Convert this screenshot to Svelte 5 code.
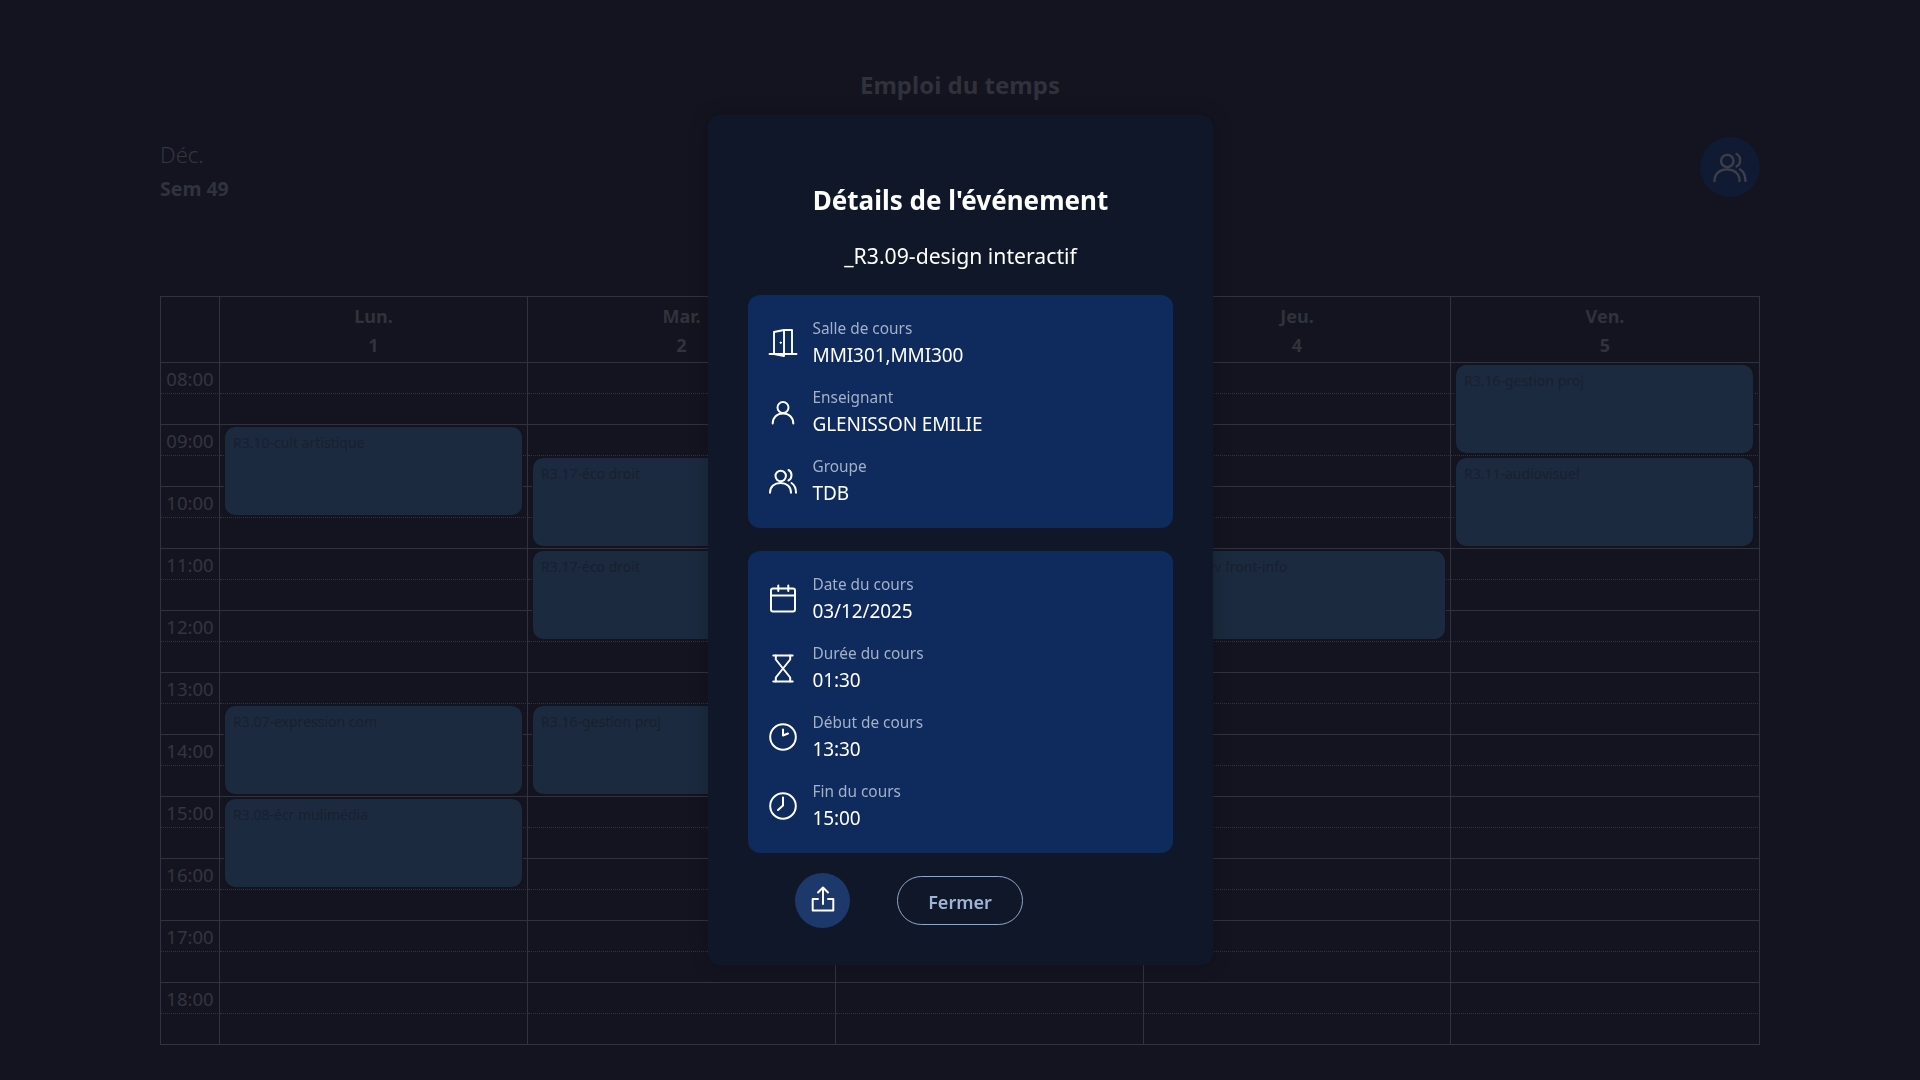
<script>
  const days = [
    { name: 'Lun.', num: 1, events: [
      { slot: 2, label: 'R3.10-cult artistique' },
      { slot: 11, label: 'R3.07-expression com' },
      { slot: 14, label: 'R3.08-écr mulimédia' }
    ] },
    { name: 'Mar.', num: 2, events: [
      { slot: 3, label: 'R3.17-éco droit' },
      { slot: 6, label: 'R3.17-éco droit' },
      { slot: 11, label: 'R3.16-gestion proj' }
    ] },
    { name: 'Mer.', num: 3, events: [] },
    { name: 'Jeu.', num: 4, events: [
      { slot: 6, label: 'R3.12-dev front-info' }
    ] },
    { name: 'Ven.', num: 5, events: [
      { slot: 0, label: 'R3.16-gestion proj' },
      { slot: 3, label: 'R3.11-audiovisuel' }
    ] }
  ];
  const hours = ['08:00','09:00','10:00','11:00','12:00','13:00','14:00','15:00','16:00','17:00','18:00'];
  const slots = Array.from({ length: 22 }, (_, i) => i);
</script>

{#snippet groupIcon(size)}
  <svg width={size} height={size} viewBox="0 0 32 32" fill="none" stroke="currentColor" stroke-width="2" stroke-linecap="round" stroke-linejoin="round">
    <circle cx="13.7" cy="11" r="5.2" />
    <path d="M3 27.7C3 21.5 7.5 18 13.5 18S24 21.5 24 27.7" />
    <path d="M21.5 5C25.5 7 25.5 13.5 21.5 15.5" />
    <path d="M24.5 18C27.5 20 29 23.5 29 27.7" />
  </svg>
{/snippet}

<div class="page">
  <h1 class="page-title">Emploi du temps</h1>
  <div class="toolbar">
    <div class="week">
      <div class="month">Déc.</div>
      <div class="sem">Sem 49</div>
    </div>
    <button class="group-btn" aria-label="Groupe">{@render groupIcon(38)}</button>
  </div>

  <div class="calendar">
    <div class="col time-col">
      <div class="head"></div>
      <div class="slots">
        {#each hours as h}
          <div class="slot half"><span class="hour">{h}</span></div>
          <div class="slot"></div>
        {/each}
      </div>
    </div>
    {#each days as d}
      <div class="col">
        <div class="head"><span>{d.name}</span><span>{d.num}</span></div>
        <div class="slots">
          {#each slots as s}
            <div class="slot" class:half={s % 2 === 0} style="grid-row: {s + 1}"></div>
          {/each}
          {#each d.events as e}
            <div class="event" style="grid-row: {e.slot + 1} / span 3">{e.label}</div>
          {/each}
        </div>
      </div>
    {/each}
  </div>
</div>

<div class="overlay">
  <div class="modal">
    <h2 class="title">Détails de l'événement</h2>
    <p class="subtitle">_R3.09-design interactif</p>

    <div class="card">
      <div class="row">
        <svg class="ico" width="32" height="32" viewBox="0 0 32 32" fill="none" stroke="currentColor" stroke-width="1.9" stroke-linecap="round" stroke-linejoin="round">
          <path d="M2.5 27H29.5" />
          <path d="M7 27V5L17 3V29L7 27" />
          <path d="M17 3H25V27" />
          <circle cx="13.7" cy="15.7" r="0.7" fill="currentColor" stroke-width="1" />
        </svg>
        <div class="txt"><span class="lab">Salle de cours</span><span class="val">MMI301,MMI300</span></div>
      </div>
      <div class="row">
        <svg class="ico" width="32" height="32" viewBox="0 0 32 32" fill="none" stroke="currentColor" stroke-width="2" stroke-linecap="round">
          <circle cx="16" cy="11.5" r="5.5" />
          <path d="M5.7 27.5C5.7 21.5 10 17.5 16 17.5S26.3 21.5 26.3 27.5" />
        </svg>
        <div class="txt"><span class="lab">Enseignant</span><span class="val">GLENISSON EMILIE</span></div>
      </div>
      <div class="row">
        <span class="ico">{@render groupIcon(32)}</span>
        <div class="txt"><span class="lab">Groupe</span><span class="val">TDB</span></div>
      </div>
    </div>

    <div class="card second">
      <div class="row">
        <svg class="ico" width="32" height="32" viewBox="0 0 32 32" fill="none" stroke="currentColor" stroke-width="2" stroke-linecap="round" stroke-linejoin="round">
          <rect x="4" y="5.5" width="24" height="23" rx="2" />
          <path d="M4 12.5H28M11.3 2.5V8M21.3 2.5V8" />
        </svg>
        <div class="txt"><span class="lab">Date du cours</span><span class="val">03/12/2025</span></div>
      </div>
      <div class="row">
        <svg class="ico" width="32" height="32" viewBox="0 0 32 32" fill="none" stroke="currentColor" stroke-width="2" stroke-linecap="round" stroke-linejoin="round">
          <path d="M6.3 3.5H25.7M6.3 29.5H25.7" />
          <path d="M8.8 3.5V7.5L23.2 25.5V29.5M23.2 3.5V7.5L8.8 25.5V29.5" />
        </svg>
        <div class="txt"><span class="lab">Durée du cours</span><span class="val">01:30</span></div>
      </div>
      <div class="row">
        <svg class="ico" width="32" height="32" viewBox="0 0 32 32" fill="none" stroke="currentColor" stroke-width="2" stroke-linecap="round" stroke-linejoin="round">
          <circle cx="16" cy="16" r="12.8" />
          <path d="M16 8.5V14.5L21 12.5" />
        </svg>
        <div class="txt"><span class="lab">Début de cours</span><span class="val">13:30</span></div>
      </div>
      <div class="row">
        <svg class="ico" width="32" height="32" viewBox="0 0 32 32" fill="none" stroke="currentColor" stroke-width="2" stroke-linecap="round" stroke-linejoin="round">
          <circle cx="16" cy="16" r="12.8" />
          <path d="M16 7.5V15.5L11 20" />
        </svg>
        <div class="txt"><span class="lab">Fin du cours</span><span class="val">15:00</span></div>
      </div>
    </div>

    <div class="actions">
      <button class="share" aria-label="Partager">
        <svg width="32" height="32" viewBox="0 0 32 32" fill="none" stroke="currentColor" stroke-width="2" stroke-linecap="round" stroke-linejoin="round">
          <path d="M11 14H5.7V25.5H26.3V14H21" />
          <path d="M16 19V2.5M11 7.5L16 2.5L21 7.5" />
        </svg>
      </button>
      <button class="close">Fermer</button>
    </div>
  </div>
</div>

<style>
  :global(body) {
    background: #13141f;
    font-family: "Noto Sans", "Open Sans", sans-serif;
  }
  .page {
    width: 1600px;
    height: 1080px;
    margin: 0 auto;
    box-sizing: border-box;
    padding-top: 68px;
    overflow: hidden;
  }
  .page-title {
    margin: 0;
    font-size: 24px;
    line-height: 34px;
    font-weight: 700;
    text-align: center;
    color: #2f313b;
  }
  .toolbar {
    display: flex;
    justify-content: space-between;
    align-items: flex-start;
    height: 194px;
  }
  .week { padding-top: 37px; }
  .month {
    font-size: 22px;
    line-height: 30px;
    font-weight: 300;
    color: #33353f;
  }
  .sem {
    font-size: 19.5px;
    line-height: 26px;
    margin-top: 7px;
    font-weight: 700;
    color: #30323c;
  }
  .group-btn {
    width: 60px;
    height: 60px;
    margin-top: 35px;
    border: 0;
    border-radius: 50%;
    padding: 0;
    background: #101a33;
    color: #3c3f4a;
    display: flex;
    align-items: center;
    justify-content: center;
  }
  .calendar {
    display: grid;
    grid-template-columns: 59px 308px 308px 308px 307px 1fr;
    border-left: 1px solid #31323d;
    border-top: 1px solid #31323d;
    width: 1600px;
    box-sizing: border-box;
  }
  .head {
    height: 66px;
    box-sizing: border-box;
    border-right: 1px solid #31323d;
    border-bottom: 1px solid #31323d;
    display: flex;
    flex-direction: column;
    align-items: center;
    padding-top: 5px;
    font-weight: 700;
    font-size: 18px;
    line-height: 29px;
    color: #30323c;
  }
  .slots {
    display: grid;
    grid-template-columns: 1fr;
    grid-auto-rows: 31px;
  }
  .slot {
    grid-column: 1;
    box-sizing: border-box;
    border-right: 1px solid #31323d;
    border-bottom: 1px solid #31323d;
    display: flex;
    align-items: center;
    justify-content: center;
  }
  .slot.half { border-bottom: 1px dotted #31323d; }
  .hour {
    font-size: 18.5px;
    line-height: 33px;
    color: #33353f;
  }
  .event {
    grid-column: 1;
    z-index: 1;
    margin: 2px 6px 3px 5px;
    background: #1b2a3e;
    border-radius: 10px;
    box-shadow: 0 0 0 1px #13141f;
    padding: 8px 8px;
    font-size: 14px;
    line-height: 16px;
    color: #182030;
  }
  .col:last-child .event { margin-right: 7px; }
  .overlay {
    position: fixed;
    inset: 0;
    padding-left: 1px;
    display: flex;
    align-items: center;
    justify-content: center;
    z-index: 10;
  }
  .modal {
    width: 505px;
    height: 850px;
    box-sizing: border-box;
    padding: 68px 40px 0;
    background: #101729;
    border-radius: 12px;
    box-shadow: 0 0 20px rgba(10, 12, 20, 0.2);
    color: #fff;
  }
  .title {
    margin: 0;
    font-size: 26px;
    line-height: 34px;
    font-weight: 700;
    text-align: center;
  }
  .subtitle {
    margin: 24px 0 24px;
    font-size: 21.2px;
    line-height: 30px;
    text-align: center;
  }
  .card {
    background: #0f2a5c;
    border-radius: 12px;
    padding: 13px 19px;
  }
  .card.second { margin-top: 23px; }
  .row {
    height: 69px;
    display: flex;
    align-items: center;
    gap: 13.5px;
  }
  .ico {
    flex: none;
    width: 32px;
    height: 32px;
    display: block;
  }
  .txt {
    display: flex;
    flex-direction: column;
    padding-top: 1px;
  }
  .lab {
    padding-top: 3px;
    font-size: 15.4px;
    line-height: 21px;
    color: #a3b1c9;
  }
  .val {
    font-size: 19px;
    line-height: 32px;
    letter-spacing: -0.1px;
    color: #fff;
  }
  .actions {
    display: flex;
    align-items: center;
    margin-top: 20px;
    padding-left: 47px;
    gap: 47px;
  }
  .share {
    width: 55px;
    height: 55px;
    padding: 0;
    border: 0;
    border-radius: 50%;
    background: #1d386a;
    color: #fff;
    display: flex;
    align-items: center;
    justify-content: center;
  }
  .close {
    width: 126px;
    height: 49px;
    padding: 2px 0 0;
    background: transparent;
    border: 1px solid #8fa8c8;
    border-radius: 25px;
    color: #9fb5d6;
    font-family: inherit;
    font-size: 18px;
    font-weight: 600;
  }
</style>
